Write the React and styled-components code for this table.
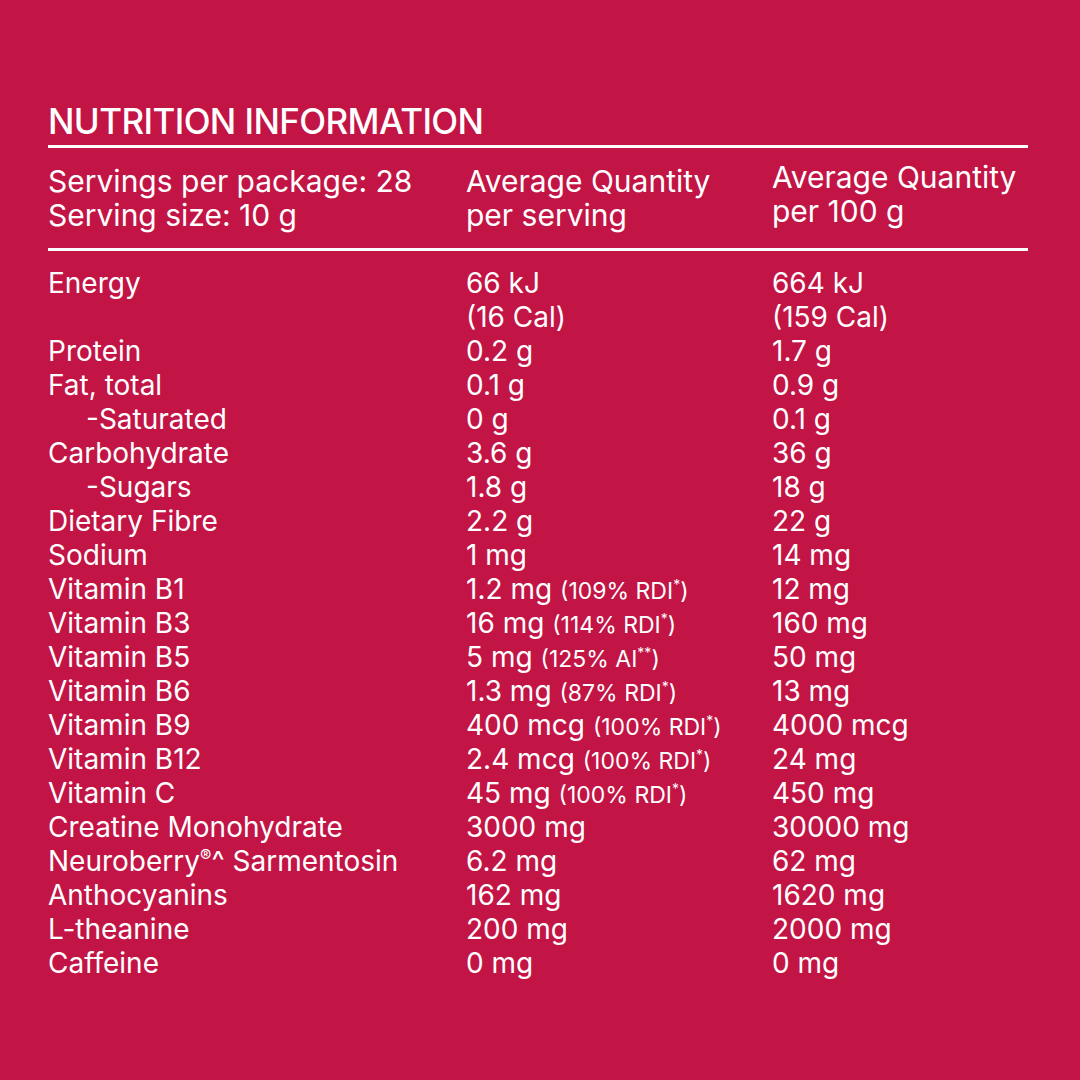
import React from 'react';
import styled, { createGlobalStyle } from 'styled-components';

const GlobalStyle = createGlobalStyle`
  html, body {
    margin: 0;
    padding: 0;
    background: #c21445;
  }
  body {
    font-family: Inter, "Liberation Sans", sans-serif;
    color: #ffffff;
  }
`;

const Page = styled.div`
  width: 1080px;
  height: 1080px;
  box-sizing: border-box;
  padding: 101px 52px 0 48px;
  background: #c21445;
`;

const Title = styled.div`
  font-size: 35px;
  font-weight: 500;
  line-height: 40px;
  letter-spacing: -0.6px;
  text-transform: uppercase;
`;

const Rule = styled.div`
  height: 3px;
  background: #ffffff;
  margin: ${(p) => p.margin || '0'};
`;

const Grid = styled.div`
  display: grid;
  grid-template-columns: 418px 306px 1fr;
`;

const HeadCell = styled.div`
  font-size: 30px;
  line-height: 34px;
  white-space: nowrap;
  margin-top: ${(p) => p.shift || '0'};
`;

const Body = styled.div`
  display: flex;
  flex-direction: column;
  margin-top: 15px;
`;

const Cell = styled.div`
  font-size: 28px;
  line-height: 34px;
  height: ${(p) => (p.lines || 1) * 34}px;
  padding-left: ${(p) => (p.indent ? '38px' : '0')};
  white-space: nowrap;
`;

const Note = styled.span`
  font-size: 23px;
  line-height: 0;
`;

const Sup = styled.sup`
  font-size: ${(p) => p.size || 14}px;
  line-height: 0;
  vertical-align: 9px;
`;

const rows = [
  ['Energy', ['66 kJ', '(16 Cal)'], ['664 kJ', '(159 Cal)']],
  ['Protein', '0.2 g', '1.7 g'],
  ['Fat, total', '0.1 g', '0.9 g'],
  ['-Saturated', '0 g', '0.1 g', true],
  ['Carbohydrate', '3.6 g', '36 g'],
  ['-Sugars', '1.8 g', '18 g', true],
  ['Dietary Fibre', '2.2 g', '22 g'],
  ['Sodium', '1 mg', '14 mg'],
  ['Vitamin B1', ['1.2 mg ', '109% RDI', '*'], '12 mg'],
  ['Vitamin B3', ['16 mg ', '114% RDI', '*'], '160 mg'],
  ['Vitamin B5', ['5 mg ', '125% AI', '**'], '50 mg'],
  ['Vitamin B6', ['1.3 mg ', '87% RDI', '*'], '13 mg'],
  ['Vitamin B9', ['400 mcg ', '100% RDI', '*'], '4000 mcg'],
  ['Vitamin B12', ['2.4 mcg ', '100% RDI', '*'], '24 mg'],
  ['Vitamin C', ['45 mg ', '100% RDI', '*'], '450 mg'],
  ['Creatine Monohydrate', '3000 mg', '30000 mg'],
  ['Neuroberry', '6.2 mg', '62 mg'],
  ['Anthocyanins', '162 mg', '1620 mg'],
  ['L-theanine', '200 mg', '2000 mg'],
  ['Caffeine', '0 mg', '0 mg'],
];

const renderValue = (v, isNote) => {
  if (!Array.isArray(v)) return v;
  if (isNote) {
    return (
      <>
        {v[0]}
        <Note>
          ({v[1]}
          <Sup>{v[2]}</Sup>)
        </Note>
      </>
    );
  }
  return v.map((line) => <div key={line}>{line}</div>);
};

const App = () => (
  <Page>
    <GlobalStyle />
    <Title>Nutrition Information</Title>
    <Rule margin="4px 0 16px" />
    <Grid>
      <HeadCell>
        Servings per package: 28
        <br />
        Serving size: 10 g
      </HeadCell>
      <HeadCell>
        Average Quantity
        <br />
        per serving
      </HeadCell>
      <HeadCell shift="-4px">
        Average Quantity
        <br />
        per 100 g
      </HeadCell>
    </Grid>
    <Rule margin="16px 0 0" />
    <Body>
      {rows.map(([name, serving, hundred, indent]) => {
        const lines = Array.isArray(hundred) ? hundred.length : 1;
        return (
          <Grid key={name}>
            <Cell indent={indent} lines={lines}>
              {name === 'Neuroberry' ? (
                <>
                  Neuroberry<Sup size={17}>®</Sup>^ Sarmentosin
                </>
              ) : (
                name
              )}
            </Cell>
            <Cell lines={lines}>
              {renderValue(serving, Array.isArray(serving) && serving.length === 3)}
            </Cell>
            <Cell lines={lines}>{renderValue(hundred, false)}</Cell>
          </Grid>
        );
      })}
    </Body>
  </Page>
);

export default App;
